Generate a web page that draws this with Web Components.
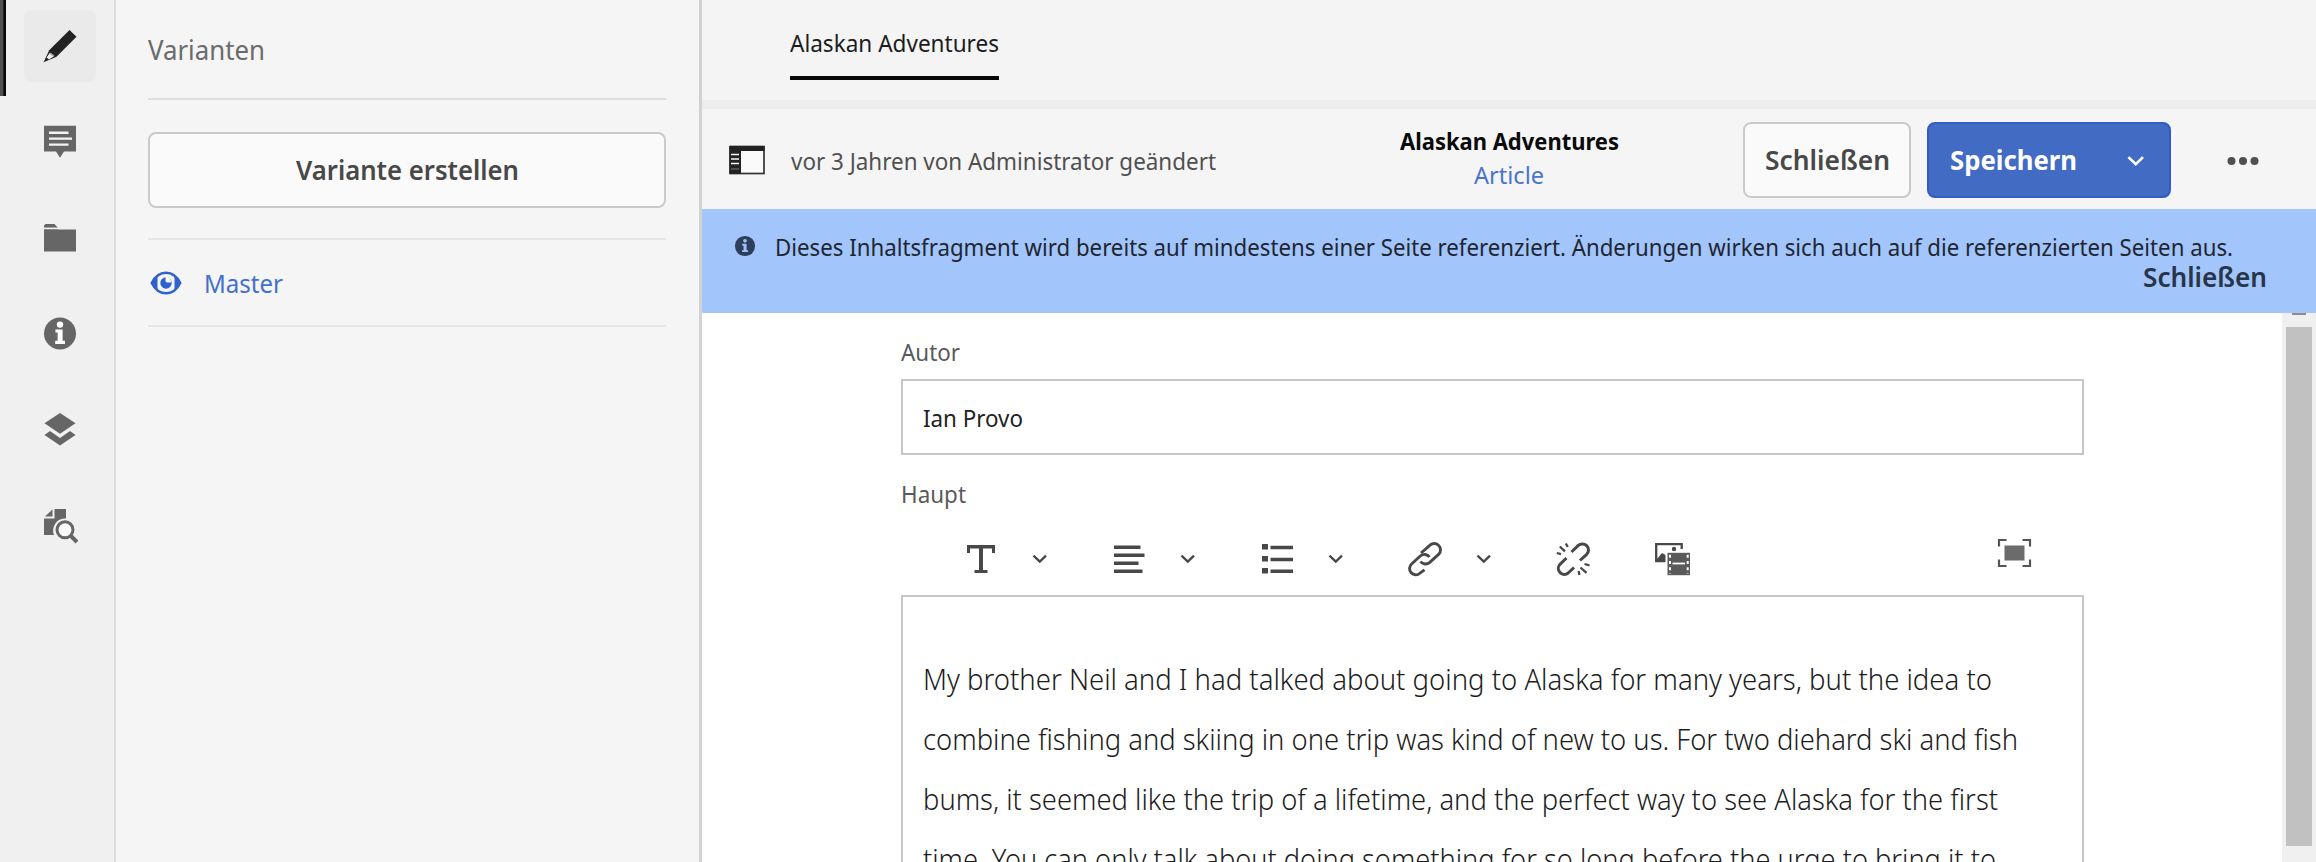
<!DOCTYPE html>
<html lang="de">
<head>
<meta charset="utf-8">
<title>Alaskan Adventures</title>
<style>
html,body{margin:0;height:100%;overflow:hidden;background:#fff}
body{font-family:"Noto Sans","Open Sans",sans-serif;font-size:24px;color:#222}
</style>
</head>
<body>
<cf-editor></cf-editor>
<script>
const define = (name, html, init) => {
  const t = document.createElement('template');
  t.innerHTML = html;
  customElements.define(name, class extends HTMLElement {
    constructor() {
      super();
      this.attachShadow({mode: 'open'}).append(t.content.cloneNode(true));
    }
    connectedCallback() { if (init) init.call(this, this.shadowRoot); }
  });
};

const icons = {
  edit: '<path fill="#222" d="M27.500 2 34.500 8.800 14.500 28.800 1.600 34.200 7.200 22.200Z"/><path fill="#ececec" d="M7.600 25 12 28.300 7 31.600 4.600 29.400Z"/><path fill="#aaa" d="M8.500 24.400 12.600 27.800 11 28.600 7.800 26Z"/>',
  comment: '<path fill="currentColor" d="M2 1.700H34V27.500H22L18 33.800 14 27.500H2Z"/><path stroke="#f4f4f4" stroke-width="2.400" d="M7 8.800H26.500M7 14.600H30M7 20.600H26.500"/>',
  folder: '<path fill="currentColor" d="M2 5.500 3.500 4H12.500L16 8V9.500H34V31.500H2Z"/><path stroke="#f0f0f0" stroke-width="1.700" fill="none" d="M2 8.400H16"/>',
  info: '<circle cx="18" cy="17.500" r="16" fill="currentColor"/><circle cx="18" cy="8.600" r="3.200" fill="#fff"/><path fill="#fff" d="M13.400 13.500H20.600V24.800H23V28H13.200V24.800H15.600V16.600H13.400Z"/>',
  infoBlue: '<circle cx="18" cy="18" r="16.500" fill="#2c3e59"/><circle cx="18" cy="9.500" r="3" fill="#9fc0f4"/><path fill="#9fc0f4" d="M13.400 14.500H20.600V24.800H23V28H13.200V24.800H15.600V17.600H13.400Z"/>',
  layers: '<path fill="currentColor" d="M18 1 33.500 11.300 18 21.700 2.500 11.300ZM2.500 23 8 19 18 26 28 19 33.500 23 18 33.500Z"/>',
  docsearch: '<path fill="currentColor" d="M12.500 1H24V10.500A12 12 0 0 0 12 27H2V10.500H12.500Z M10.500 1.500V8.500H3Z"/><circle cx="23" cy="21.800" r="8" fill="#fafafa" stroke="currentColor" stroke-width="3"/><path stroke="currentColor" stroke-width="4" d="M28.500 27.500 35 34"/>',
  eye: '<path fill="none" stroke="currentColor" stroke-width="2.800" d="M3 18C10 3.500 26 3.500 33 18 26 32.500 10 32.500 3 18Z"/><path fill="currentColor" d="M2 18 9 10.500V25.500ZM34 18 27 10.500V25.500Z"/><circle cx="18" cy="18" r="6" fill="currentColor"/><path fill="#fafafa" d="M17.500 11.500a6 6 0 0 1 6 6h-4a2.500 2.500 0 0 1-2-3Z"/>',
  panel: '<rect x="1" y="4.500" width="34" height="27" fill="#fafafa" stroke="#333" stroke-width="1.700"/><path fill="#222" d="M.5 4H35.500V9H.5ZM.5 9H12V32H.5Z"/><path stroke="#fafafa" stroke-width="1.700" d="M2 12.500H10M2 17H10M2 21.500H10"/><path stroke="#777" stroke-width="1" d="M2 27H10"/>',
  chevron: '<path d="M11.500 14.700 17.800 20.700 24 14.700" fill="none" stroke="currentColor" stroke-width="2.300"/>',
  text: '<path fill="currentColor" d="M4 4H32V12H29V7.500H20V29H24.500V32H11.500V29H16V7.500H7V12H4Z"/>',
  align: '<path stroke="currentColor" stroke-width="3.600" d="M3 6.200H29.500M3 14.200H33.500M3 22.200H27.500M3 30.200H31.500"/>',
  list: '<path stroke="currentColor" stroke-width="3.600" d="M11.500 6.500H34M11.500 18.500H34M11.500 30.200H34"/><path fill="currentColor" d="M3 3H9V8.500H3ZM3 15H9V20.500H3ZM3 27H9V32.500H3Z"/>',
  link: '<g fill="none" stroke="currentColor" stroke-width="2.900"><path d="M14 12 22.500 4.600A6.200 6.200 0 0 1 31.800 13.200L22.500 21.600A6.200 6.200 0 0 1 13.500 20.500"/><path d="M22.500 16A6.200 6.200 0 0 0 13.500 14.800L4.600 23A6.200 6.200 0 0 0 13 32.200L17.500 28.800"/></g>',
  unlink: '<g fill="none" stroke="currentColor" stroke-width="3"><path d="M16.500 11 23 4.700A6 6 0 0 1 31.700 13.300L25 19.500"/><path d="M11.500 17 4.700 23.600A6 6 0 0 0 13.200 32L19 26.500"/><path stroke-width="2.300" d="M10.800 2.500 12.800 6M4.800 5.500 10 10.300M1.800 12 6 13.200M29.500 23 34.500 24.300M25.500 26.500 31.500 31.800M23.500 30 24.500 34"/></g>',
  media: '<path fill="none" stroke="currentColor" stroke-width="2.300" d="M27.700 8V3.200H2.200V20H11"/><path fill="currentColor" d="M3 18 8 12 11.500 14V21H3Z"/><circle cx="20" cy="8" r="2.200" fill="currentColor"/><path fill="#5a5a5a" d="M13.500 11.800H36V34.200H13.500Z"/><path stroke="#fff" stroke-width="1.800" d="M18.500 22.500H31"/><path stroke="#fff" stroke-width="2" stroke-dasharray="3 3.200" d="M16 13.800V33M33.700 13.800V33"/>',
  full: '<path fill="currentColor" d="M8.500 10.500H28.500V25.500H8.500Z"/><path fill="none" stroke="#555" stroke-width="2.200" d="M3 11.500V5H10.500M26.500 5H34V11.500M34 24.500V31H26.500M10.500 31H3V24.500"/>',
  more: '<g fill="currentColor"><circle cx="6.500" cy="18" r="4"/><circle cx="18" cy="18" r="4"/><circle cx="29.500" cy="18" r="4"/></g>'
};

define('ui-icon', `<style>:host{display:block;flex:none;width:36px;height:36px;color:#666}svg{display:block;width:100%;height:100%}</style><svg viewBox="0 0 36 36"></svg>`,
  function (r) { r.querySelector('svg').innerHTML = icons[this.getAttribute('name')]; });

/* A single line of text, condensed or widened to the width in its "w" attribute. */
define('fit-text', `<style>:host{display:block;flex:none;white-space:nowrap}span{display:inline-block;transform-origin:0 50%;vertical-align:top}</style><span><slot></slot></span>`,
  function (r) {
    const w = +this.getAttribute('w'), s = r.querySelector('span');
    this.style.width = w + 'px';
    s.style.transform = `scaleX(${w / s.getBoundingClientRect().width})`;
  });

define('side-rail', `<style>
:host{display:flex;flex-direction:column;align-items:center;gap:24px;box-sizing:border-box;width:116px;padding:10px 0 0 6px;background:#f0f0f0;border-right:2px solid #dcdcdc;position:relative}
i{position:absolute;left:0;top:0;width:6px;height:96px;background:linear-gradient(90deg,#505050 55%,#080808 60%)}
div{display:flex;align-items:center;justify-content:center;width:72px;height:72px;border-radius:6px}
.on{background:#eaeaea}</style>
<i></i><div class="on"><ui-icon name="edit"></ui-icon></div><div><ui-icon name="comment"></ui-icon></div><div><ui-icon name="folder"></ui-icon></div><div><ui-icon name="info"></ui-icon></div><div><ui-icon name="layers"></ui-icon></div><div><ui-icon name="docsearch"></ui-icon></div>`);

define('ui-button', `<style>
:host{display:flex;flex:none;align-items:center;justify-content:center;box-sizing:border-box;height:76px;border:2px solid #cacaca;border-radius:8px;background:#fafafa;color:#484848;font-weight:600;font-size:26.500px;line-height:72px}
:host([primary]){background:#426bc4;border-color:#2f5dc2;color:#fff;font-weight:700}
::slotted(ui-icon){color:#fff}</style><slot></slot>`);

define('variants-panel', `<style>
:host{display:block;box-sizing:border-box;width:586px;padding:0 33px 0 32px;background:#f5f5f5;border-right:3px solid #d2d2d2}
h2{margin:0;height:100px;box-sizing:border-box;padding-top:21px;border-bottom:2px solid #dedede;font:400 26.500px/58px "Noto Sans",sans-serif;color:#6b6b6b}
.b{padding:32px 0 30px;border-bottom:2px solid #e6e6e6}
.m{display:flex;align-items:center;gap:21px;height:85px;border-bottom:2px solid #e6e6e6;color:#4270ca;font-size:26px;line-height:40px}
.m ui-icon{width:34px;height:34px;color:#2f62cc;margin:1px 0 0 1px}.m fit-text{margin-top:1px}</style>
<h2><fit-text w="117">Varianten</fit-text></h2>
<div class="b"><ui-button><fit-text w="223">Variante erstellen</fit-text></ui-button></div>
<div class="m"><ui-icon name="eye"></ui-icon><fit-text w="79">Master</fit-text></div>`);

define('tab-bar', `<style>
:host{display:block;box-sizing:border-box;height:109px;padding:20px 0 0 88px;background:#f4f4f4;border-bottom:9px solid #ededed}
div{width:209px;height:56px;border-bottom:4px solid #080808;line-height:45px;color:#1c1c1c}</style><div><fit-text w="209">Alaskan Adventures</fit-text></div>`);

define('title-bar', `<style>
:host{display:flex;align-items:center;box-sizing:border-box;height:100px;padding:1px 0 0 27px;background:#f5f5f5}
.s{margin:2px 0 0 26px;color:#505050;line-height:40px}
.t{margin:-4px 0 0 183px;width:220px;line-height:34px;display:flex;flex-direction:column;align-items:center;font-weight:700;color:#0a0a0a}
.t .a{color:#4a74cc;font-weight:400}
.c{width:168px;margin-left:124px}.p{width:244px;margin-left:16px;justify-content:flex-start;padding-left:21px}
.p ui-icon{margin:3px 0 0 38px;width:42px;height:42px}
.more{margin:2px 0 0 54px;color:#505050}</style>
<ui-icon name="panel"></ui-icon><fit-text class="s" w="425">vor 3 Jahren von Administrator geändert</fit-text>
<div class="t"><fit-text w="219">Alaskan Adventures</fit-text><fit-text class="a" w="70">Article</fit-text></div>
<ui-button class="c"><fit-text w="125">Schließen</fit-text></ui-button>
<ui-button class="p" primary><fit-text w="127">Speichern</fit-text><ui-icon name="chevron"></ui-icon></ui-button>
<ui-icon class="more" name="more"></ui-icon>`);

define('notice-bar', `<style>
:host{display:block;box-sizing:border-box;height:104px;padding:17px 49px 0 32px;background:#a2c5fb;color:#1f2632}
.r{display:flex;align-items:center;height:40px}.r ui-icon{width:22px;height:22px}.r fit-text{margin-left:18.500px}
.x{display:flex;justify-content:flex-end;margin-top:-9px;font-weight:600;font-size:26.500px;line-height:40px;color:#28344a}</style>
<div class="r"><ui-icon name="infoBlue"></ui-icon><fit-text w="1458">Dieses Inhaltsfragment wird bereits auf mindestens einer Seite referenziert. Änderungen wirken sich auch auf die referenzierten Seiten aus.</fit-text></div>
<div class="x"><fit-text w="124">Schließen</fit-text></div>`);

define('text-tools', `<style>
:host{display:flex;align-items:flex-start;height:54px;padding-left:62px;margin-top:27px}
ui-icon{color:#484848}.g{display:flex;width:148px}.g ui-icon+ui-icon{margin-left:23px}
.f{margin:-6px 0 0 306px;color:#6b6b6b}.u{margin-right:63px}</style>
<div class="g"><ui-icon name="text"></ui-icon><ui-icon name="chevron"></ui-icon></div>
<div class="g"><ui-icon name="align"></ui-icon><ui-icon name="chevron"></ui-icon></div>
<div class="g"><ui-icon name="list"></ui-icon><ui-icon name="chevron"></ui-icon></div>
<div class="g"><ui-icon name="link"></ui-icon><ui-icon name="chevron"></ui-icon></div>
<ui-icon class="u" name="unlink"></ui-icon><ui-icon name="media"></ui-icon><ui-icon class="f" name="full"></ui-icon>`);

define('fragment-form', `<style>
:host{display:flex;min-height:0;flex:1;background:#fff;overflow:hidden}
.f{width:1183px;margin-left:199px}
.l{line-height:40px;color:#5a5a5a}
.in{box-sizing:border-box;height:76px;border:2px solid #c6c6c6;padding:1px 0 0 20px;line-height:72px;color:#222}
.ed{box-sizing:border-box;height:340px;border:2px solid #c6c6c6;padding:52px 0 0 20px;font-size:30px;font-weight:300;line-height:60px;color:#1c1c1c}
.sb{margin-left:auto;width:34px;background:#f0f0f0;display:flex;flex-direction:column;align-items:center}
.up{width:14px;height:2px;background:#8c8c8c;margin-bottom:12px}.th{width:26px;height:519px;background:#c1c1c1}</style>
<div class="f">
<div class="l" style="padding-top:19px;height:47px"><fit-text w="59">Autor</fit-text></div>
<div class="in"><fit-text w="100">Ian Provo</fit-text></div>
<div class="l" style="padding-top:19px"><fit-text w="65">Haupt</fit-text></div>
<text-tools></text-tools>
<div class="ed"><fit-text w="1069">My brother Neil and I had talked about going to Alaska for many years, but the idea to</fit-text><fit-text w="1095">combine fishing and skiing in one trip was kind of new to us. For two diehard ski and fish</fit-text><fit-text w="1075">bums, it seemed like the trip of a lifetime, and the perfect way to see Alaska for the first</fit-text><fit-text w="1073">time. You can only talk about doing something for so long before the urge to bring it to</fit-text></div>
</div>
<div class="sb"><div class="up"></div><div class="th"></div></div>`);

define('cf-editor', `<style>
:host{display:flex;width:2316px;height:862px;overflow:hidden}
main{flex:1;min-width:0;display:flex;flex-direction:column}</style>
<side-rail></side-rail><variants-panel></variants-panel>
<main><tab-bar></tab-bar><title-bar></title-bar><notice-bar></notice-bar><fragment-form></fragment-form></main>`);
</script>
</body>
</html>
